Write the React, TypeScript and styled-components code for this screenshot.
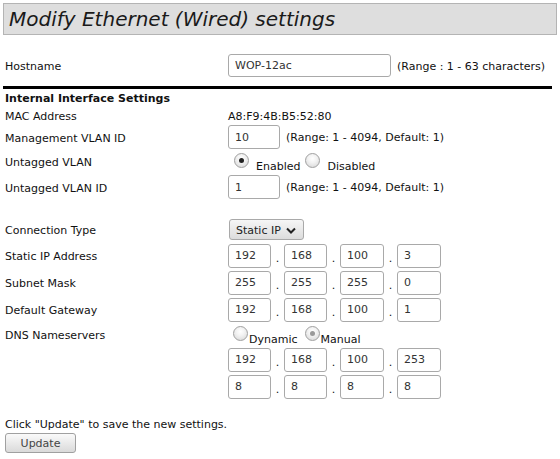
import React from "react";
import styled, { createGlobalStyle } from "styled-components";

// Page level defaults
const GlobalStyle = createGlobalStyle`
  body {
    margin: 0;
    background: #fff;
    font-family: "DejaVu Sans", Verdana, sans-serif;
    font-size: 11px;
    color: #111;
  }
`;

const Page = styled.div`
  padding: 3px;
`;

// Grey title bar at the top
const TitleBar = styled.h1`
  margin: 0;
  height: 30px;
  border: 1px solid #b4b4b4;
  background: #dedede;
  padding-left: 5px;
  font-size: 20px;
  font-style: italic;
  font-weight: normal;
  line-height: 31px;
  color: #1a1a1a;
`;

const Form = styled.div`
  margin-top: 17px;
  padding-left: 2px;
`;

// One line of the form: label on the left, value on the right
const Row = styled.div<{ $h: number; $mt?: number }>`
  display: grid;
  grid-template-columns: 223px 1fr;
  align-items: center;
  height: ${(p) => p.$h}px;
  margin-top: ${(p) => p.$mt || 0}px;
`;

const Label = styled.div`
  white-space: nowrap;
  padding-top: 2px;
`;

const Value = styled.div`
  display: flex;
  align-items: center;
`;

const PlainValue = styled.div`
  padding-top: 2px;
`;

const Rule = styled.hr`
  margin: 7px 5px 0 -2px;
  border: 0;
  height: 3px;
  background: #000;
`;

const SectionTitle = styled.div`
  height: 18px;
  line-height: 18px;
  padding-top: 1px;
  box-sizing: border-box;
  font-weight: bold;
`;

const TextBox = styled.input<{ $w: number; $h?: number }>`
  box-sizing: border-box;
  width: ${(p) => p.$w}px;
  height: ${(p) => p.$h || 24}px;
  margin: 0;
  padding: 0 0 0 6px;
  border: 1px solid #a9a9a9;
  border-radius: 3px;
  background: #fff;
  font-family: "DejaVu Sans", Verdana, sans-serif;
  font-size: 11px;
  color: #333;
  outline: none;
`;

const Hint = styled.span`
  margin-left: 6px;
  padding-top: 1px;
  white-space: nowrap;
`;

// Octet separator between IP boxes
const Dot = styled.span`
  width: 13px;
  text-align: center;
  padding-top: 5px;
`;

const RadioGroup = styled.div`
  display: flex;
  align-items: flex-start;
  height: 100%;
`;

const RadioOption = styled.label<{ $gap: number; $ml: number }>`
  display: flex;
  align-items: flex-start;
  margin-left: ${(p) => p.$ml}px;
  gap: ${(p) => p.$gap}px;
`;

const RadioCircle = styled.span<{ $dot?: string }>`
  position: relative;
  box-sizing: border-box;
  width: 15px;
  height: 15px;
  margin-top: 3px;
  border: 1px solid #a0a0a0;
  border-radius: 50%;
  background: radial-gradient(circle at 50% 35%, #ffffff 0%, #f2f2f2 40%, #d4d4d4 100%);
  &::after {
    content: "";
    display: ${(p) => (p.$dot ? "block" : "none")};
    position: absolute;
    left: 4px;
    top: 4px;
    width: 5px;
    height: 5px;
    border-radius: 50%;
    background: ${(p) => p.$dot || "transparent"};
  }
`;

const RadioText = styled.span`
  padding-top: 10px;
`;

const Select = styled.div`
  box-sizing: border-box;
  display: flex;
  align-items: center;
  gap: 5px;
  width: 75px;
  height: 21px;
  margin-left: 1px;
  padding: 1px 0 0 6px;
  border: 1px solid #a9a9a9;
  border-radius: 3px;
  background: linear-gradient(#f6f6f6, #dcdcdc);
  color: #222;
`;

const Note = styled.div`
  margin-top: 15px;
  height: 17px;
  line-height: 17px;
  padding-top: 1px;
`;

const Button = styled.button`
  width: 71px;
  height: 20px;
  margin-top: 0;
  padding: 0;
  border: 1px solid #a0a0a0;
  border-radius: 3px;
  background: linear-gradient(#fafafa, #dadada);
  font-family: "DejaVu Sans", Verdana, sans-serif;
  font-size: 11px;
  color: #444;
`;

const Chevron = () => (
  <svg width="10" height="7" viewBox="0 0 10 7">
    <path d="M1 1.5 L5 5.5 L9 1.5" fill="none" stroke="#222" strokeWidth="2" />
  </svg>
);

const IpBoxes = ({ octets }: { octets: string[] }) => (
  <Value>
    {octets.map((o, i) => (
      <React.Fragment key={i}>
        {i > 0 && <Dot>.</Dot>}
        <TextBox $w={i === 2 || i === 3 ? 44 : 43} defaultValue={o} />
      </React.Fragment>
    ))}
  </Value>
);

const App = () => {
  return (
    <Page>
      <GlobalStyle />
      <TitleBar>Modify Ethernet (Wired) settings</TitleBar>
      <Form>
        <Row $h={27}>
          <Label>Hostname</Label>
          <Value>
            <TextBox $w={163} $h={23} defaultValue="WOP-12ac" />
            <Hint>(Range : 1 - 63 characters)</Hint>
          </Value>
        </Row>
        <Rule />
        <SectionTitle>Internal Interface Settings</SectionTitle>
        <Row $h={17}>
          <Label>MAC Address</Label>
          <PlainValue>A8:F9:4B:B5:52:80</PlainValue>
        </Row>
        <Row $h={26}>
          <Label>Management VLAN ID</Label>
          <Value>
            <TextBox $w={52} defaultValue="10" />
            <Hint>(Range: 1 - 4094, Default: 1)</Hint>
          </Value>
        </Row>
        <Row $h={23}>
          <Label>Untagged VLAN</Label>
          <RadioGroup>
            <RadioOption $gap={7} $ml={6}>
              <RadioCircle $dot="#222" />
              <RadioText>Enabled</RadioText>
            </RadioOption>
            <RadioOption $gap={7} $ml={5}>
              <RadioCircle />
              <RadioText>Disabled</RadioText>
            </RadioOption>
          </RadioGroup>
        </Row>
        <Row $h={28}>
          <Label>Untagged VLAN ID</Label>
          <Value>
            <TextBox $w={52} defaultValue="1" />
            <Hint>(Range: 1 - 4094, Default: 1)</Hint>
          </Value>
        </Row>
        <Row $h={25} $mt={16}>
          <Label>Connection Type</Label>
          <Value>
            <Select>
              Static IP <Chevron />
            </Select>
          </Value>
        </Row>
        <Row $h={27}>
          <Label>Static IP Address</Label>
          <IpBoxes octets={["192", "168", "100", "3"]} />
        </Row>
        <Row $h={27}>
          <Label>Subnet Mask</Label>
          <IpBoxes octets={["255", "255", "255", "0"]} />
        </Row>
        <Row $h={27}>
          <Label>Default Gateway</Label>
          <IpBoxes octets={["192", "168", "100", "1"]} />
        </Row>
        <Row $h={23}>
          <Label>DNS Nameservers</Label>
          <RadioGroup>
            <RadioOption $gap={1} $ml={5}>
              <RadioCircle />
              <RadioText>Dynamic</RadioText>
            </RadioOption>
            <RadioOption $gap={1} $ml={7}>
              <RadioCircle $dot="#9a9a9a" />
              <RadioText>Manual</RadioText>
            </RadioOption>
          </RadioGroup>
        </Row>
        <Row $h={27}>
          <Label />
          <IpBoxes octets={["192", "168", "100", "253"]} />
        </Row>
        <Row $h={27}>
          <Label />
          <IpBoxes octets={["8", "8", "8", "8"]} />
        </Row>
        <Note>Click "Update" to save the new settings.</Note>
        <Button>Update</Button>
      </Form>
    </Page>
  );
};

export default App;
